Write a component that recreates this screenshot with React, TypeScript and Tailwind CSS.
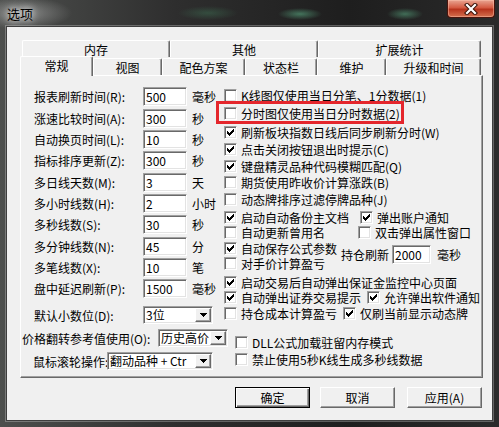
import React from "react";

const SUNKEN =
  "bg-white border border-t-[#a0a0a0] border-l-[#a0a0a0] border-r-white border-b-white shadow-[inset_1px_1px_0_#696969,inset_-1px_-1px_0_#e3e3e3]";
const RAISED =
  "bg-[#f0f0f0] border border-t-white border-l-white border-r-[#696969] border-b-[#696969] shadow-[inset_-1px_-1px_0_#a0a0a0]";

function Check({ on }: { on?: boolean }) {
  const cols: [number, number][] = [
    [3, 5],
    [4, 6],
    [5, 7],
    [6, 6],
    [7, 5],
    [8, 4],
    [9, 3],
  ];
  return (
    <span className={`relative block w-[13px] h-[13px] shrink-0 mt-[2px] ${SUNKEN}`}>
      {on && (
        <svg
          className="absolute left-[-1px] top-[-1px]"
          width="13"
          height="13"
          viewBox="0 0 13 13"
          shapeRendering="crispEdges"
        >
          {cols.map(([x, y]) => (
            <rect key={x} x={x} y={y} width="1" height="3" fill="#000" />
          ))}
        </svg>
      )}
    </span>
  );
}

function CB({ on, label, className = "" }: { on?: boolean; label: string; className?: string }) {
  return (
    <div className={`flex items-start shrink-0 ${className}`}>
      <Check on={on} />
      <span className="ml-[4px] mt-[2px] leading-[13px] whitespace-nowrap">{label}</span>
    </div>
  );
}

function Arrow() {
  return (
    <svg width="7" height="4" viewBox="0 0 7 4" shapeRendering="crispEdges">
      <rect x="0" y="0" width="7" height="1" fill="#000" />
      <rect x="1" y="1" width="5" height="1" fill="#000" />
      <rect x="2" y="2" width="3" height="1" fill="#000" />
      <rect x="3" y="3" width="1" height="1" fill="#000" />
    </svg>
  );
}

function Combo({ text, className }: { text: string; className: string }) {
  return (
    <div className={`${className} h-[18px] shrink-0 flex items-center pl-[2px] pr-[1px] ${SUNKEN}`}>
      <span className="flex-1 whitespace-nowrap leading-[14px]">{text}</span>
      <span className={`w-[16px] h-[14px] shrink-0 flex items-center justify-center ${RAISED}`}>
        <Arrow />
      </span>
    </div>
  );
}

const fields: [string, string, string, string][] = [
  ["报表刷新时间(R):", "500", "毫秒", ""],
  ["涨速比较时间(A):", "300", "秒", "mt-[3px]"],
  ["自动换页时间(L):", "10", "秒", "mt-[2px]"],
  ["指标排序更新(Z):", "300", "秒", "mt-[2px]"],
  ["多日线天数(M):", "3", "天", "mt-[3px]"],
  ["多小时线数(H):", "2", "小时", "mt-[2px]"],
  ["多秒线数(S):", "30", "秒", "mt-[2px]"],
  ["多分钟线数(N):", "45", "分", "mt-[3px]"],
  ["多笔线数(X):", "10", "笔", "mt-[2px]"],
  ["盘中延迟刷新(P):", "1500", "毫秒", "mt-[2px]"],
];

function BackTab({ label, className }: { label: string; className: string }) {
  return (
    <div
      className={`${className} h-[17px] shrink-0 flex items-center justify-center leading-[13px] border-t border-l border-r border-t-white border-l-white border-r-[#696969] shadow-[inset_-1px_0_0_#a0a0a0] rounded-t-[2px]`}
    >
      {label}
    </div>
  );
}

function FrontTab({ label, className, sel }: { label: string; className: string; sel?: boolean }) {
  return (
    <div
      className={`${className} shrink-0 self-end flex items-center justify-center leading-[13px] border-t border-l border-r border-t-white border-l-white border-r-[#696969] shadow-[inset_-1px_0_0_#a0a0a0] rounded-t-[2px] ${
        sel ? "h-[20px] -mb-[1px] relative z-10 bg-[#f0f0f0] pb-[3px]" : "h-[17px]"
      }`}
    >
      {label}
    </div>
  );
}

export default function App() {
  return (
    <div className="font-['Noto_Sans_CJK_SC',sans-serif] text-[12px] text-black w-[499px] h-[427px] overflow-hidden relative flex flex-col [background:radial-gradient(ellipse_30px_7px_at_208px_13px,rgba(70,140,100,0.35),transparent),radial-gradient(ellipse_22px_6px_at_300px_14px,rgba(90,170,130,0.6),transparent),radial-gradient(ellipse_18px_6px_at_405px_14px,rgba(90,170,130,0.55),transparent),radial-gradient(ellipse_50px_16px_at_22px_13px,rgba(200,200,200,0.5),transparent),linear-gradient(to_right,#4d4f4d,#2e2e2e_35%,#1e1e1e_70%,#2a2a2a)]">
      {/* title bar */}
      <div className="h-[26px] shrink-0 flex items-center pl-[7px]">
        <span className="text-[13px] leading-[13px] [text-shadow:0_0_6px_rgba(255,255,255,0.95),0_0_12px_rgba(255,255,255,0.7)]">
          选项
        </span>
      </div>
      {/* close button */}
      <div className="absolute right-[4px] top-0 w-[48px] h-[18px] rounded-b-[4px] border border-t-0 border-[#4a140c] bg-[linear-gradient(to_bottom,#e9a592,#d45a42_45%,#b7341d_55%,#d4704f)] shadow-[inset_0_0_0_1px_rgba(255,200,180,0.45)] flex items-center justify-center">
        <svg width="14" height="12" viewBox="0 0 14 12">
          <path d="M3 2 L11 10 M11 2 L3 10" stroke="#3a1208" strokeWidth="4.2" strokeLinecap="square" />
          <path d="M3 2 L11 10 M11 2 L3 10" stroke="#ffffff" strokeWidth="2.2" strokeLinecap="square" />
        </svg>
      </div>

      {/* client area */}
      <div className="mx-[6px] h-[395px] shrink-0 border border-[#3e3e3e] bg-[#f0f0f0] shadow-[0_0_0_1px_rgba(210,210,210,0.35)] flex flex-col">
        <div className="ml-[13px] mt-[13px] w-[463px] flex flex-col">
          {/* back row */}
          <div className="flex h-[17px] pl-[2px]">
            <BackTab label="内存" className="w-[148px]" />
            <BackTab label="其他" className="w-[148px]" />
            <BackTab label="扩展统计" className="w-[163px]" />
          </div>
          {/* front row */}
          <div className="flex h-[18px] items-end">
            <FrontTab label="常规" className="w-[73px]" sel />
            <FrontTab label="视图" className="w-[69px]" />
            <FrontTab label="配色方案" className="w-[83px]" />
            <FrontTab label="状态栏" className="w-[72px]" />
            <FrontTab label="维护" className="w-[69px]" />
            <FrontTab label="升级和时间" className="w-[95px]" />
          </div>
          {/* panel */}
          <div className="h-[303px] border border-t-white border-l-white border-r-[#696969] border-b-[#696969] shadow-[inset_-1px_-1px_0_#a0a0a0] flex flex-col">
            <div className="flex items-start pt-[11px]">
              {/* left column */}
              <div className="w-[203px] shrink-0 pl-[13px] flex flex-col">
                {fields.map(([label, v, unit, mt]) => (
                  <div key={label} className={`flex items-center h-[19px] ${mt}`}>
                    <span className="w-[109px] shrink-0 whitespace-nowrap leading-[15px]">{label}</span>
                    <div className={`w-[44px] h-[19px] shrink-0 flex items-center pl-[2px] leading-[14px] ${SUNKEN}`}>
                      {v}
                    </div>
                    <span className="ml-[5px] whitespace-nowrap leading-[15px]">{unit}</span>
                  </div>
                ))}
                <div className="mt-[8px] h-[18px] flex items-center">
                  <span className="w-[109px] shrink-0 whitespace-nowrap leading-[15px]">默认小数位(D):</span>
                  <Combo text="3位" className="w-[70px]" />
                </div>
              </div>
              {/* right column */}
              <div className="flex flex-col">
                <div className="h-[18px] flex">
                  <CB label="K线图仅使用当日分笔、1分数据(1)" />
                </div>
                <div className="h-[19px] flex relative">
                  <CB label="分时图仅使用当日分时数据(2)" />
                  <div className="absolute left-[-8px] top-[-4px] w-[188px] h-[23px] border-[3px] border-[#e4262c] pointer-events-none" />
                </div>
                <div className="h-[17px] flex">
                  <CB on label="刷新板块指数日线后同步刷新分时(W)" />
                </div>
                <div className="h-[17px] flex">
                  <CB on label="点击关闭按钮退出时提示(C)" />
                </div>
                <div className="h-[16px] flex">
                  <CB on label="键盘精灵品种代码模糊匹配(Q)" />
                </div>
                <div className="h-[17px] flex">
                  <CB label="期货使用昨收价计算涨跌(B)" />
                </div>
                <div className="h-[18px] flex">
                  <CB label="动态牌排序过滤停牌品种(J)" />
                </div>
                <div className="h-[15px] flex">
                  <CB on label="启动自动备份主文档" className="w-[136px]" />
                  <CB on label="弹出账户通知" />
                </div>
                <div className="h-[16px] flex">
                  <CB label="自动更新曾用名" className="w-[134px]" />
                  <CB label="双击弹出属性窗口" />
                </div>
                <div className="h-[34px] flex">
                  <div className="w-[117px] shrink-0 flex flex-col">
                    <div className="h-[15px] flex">
                      <CB on label="自动保存公式参数" />
                    </div>
                    <div className="h-[19px] flex">
                      <CB label="对手价计算盈亏" />
                    </div>
                  </div>
                  <div className="mt-[5px] h-[19px] flex items-center">
                    <span className="w-[51px] shrink-0 whitespace-nowrap leading-[15px]">持仓刷新</span>
                    <div className={`w-[39px] h-[19px] shrink-0 flex items-center pl-[2px] leading-[14px] ${SUNKEN}`}>
                      2000
                    </div>
                    <span className="ml-[6px] whitespace-nowrap leading-[15px]">毫秒</span>
                  </div>
                </div>
                <div className="h-[15px] flex">
                  <CB on label="启动交易后自动弹出保证金监控中心页面" />
                </div>
                <div className="h-[16px] flex">
                  <CB on label="自动弹出证券交易提示" className="w-[143px]" />
                  <CB on label="允许弹出软件通知" />
                </div>
                <div className="h-[17px] flex">
                  <CB label="持仓成本计算盈亏" className="w-[119px]" />
                  <CB on label="仅刷当前显示动态牌" />
                </div>
              </div>
            </div>
            {/* bottom section */}
            <div className="flex items-start">
              <div className="w-[214px] shrink-0 flex flex-col">
                <div className="mt-[5px] h-[18px] flex items-center pl-[1px]">
                  <span className="w-[136px] shrink-0 whitespace-nowrap leading-[15px]">价格翻转参考值使用(O):</span>
                  <Combo text="历史高价" className="w-[70px]" />
                </div>
                <div className="mt-[5px] h-[18px] flex items-center pl-[12px]">
                  <span className="w-[74px] shrink-0 whitespace-nowrap leading-[15px]">鼠标滚轮操作:</span>
                  <Combo text="翻动品种 + Ctr" className="w-[106px]" />
                </div>
              </div>
              <div className="pt-[10px] flex flex-col">
                <div className="h-[17px] flex">
                  <CB label="DLL公式加载驻留内存模式" />
                </div>
                <div className="h-[17px] flex">
                  <CB label="禁止使用5秒K线生成多秒线数据" />
                </div>
              </div>
            </div>
          </div>
        </div>
        {/* buttons */}
        <div className="flex mt-[9px] ml-[228px]">
          <button className="w-[75px] h-[21px] border border-black bg-[#f0f0f0] shadow-[inset_1px_1px_0_#ffffff,inset_-1px_-1px_0_#696969,inset_-2px_-2px_0_#a0a0a0] leading-[15px]">
            确定
          </button>
          <button className={`w-[75px] h-[21px] ml-[10px] leading-[15px] ${RAISED}`}>取消</button>
          <button className={`w-[75px] h-[21px] ml-[12px] leading-[15px] ${RAISED}`}>应用(A)</button>
        </div>
      </div>
    </div>
  );
}
